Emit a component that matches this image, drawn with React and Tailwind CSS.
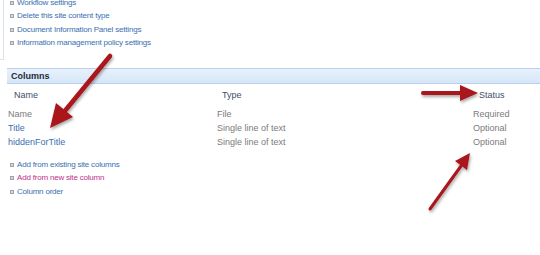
import React from "react";

const topLinks = [
  "Workflow settings",
  "Delete this site content type",
  "Document Information Panel settings",
  "Information management policy settings",
];

const rows = [
  { name: "Name", type: "File", status: "Required", link: false },
  { name: "Title", type: "Single line of text", status: "Optional", link: true },
  { name: "hiddenForTitle", type: "Single line of text", status: "Optional", link: true },
];

const bottomLinks = [
  { label: "Add from existing site columns", color: "text-[#3b6fb0]" },
  { label: "Add from new site column", color: "text-[#c0318a]" },
  { label: "Column order", color: "text-[#3b6fb0]" },
];

function Bullet() {
  return <span className="inline-block w-[4px] h-[4px] border border-[#9aa3ad] bg-[#d4d9de] mr-[3px] shrink-0" />;
}

function Arrows() {
  return (
    <svg className="absolute inset-0 pointer-events-none" width="540" height="255" viewBox="0 0 540 255">
      <defs>
        <filter id="sh" x="-20%" y="-20%" width="140%" height="140%">
          <feDropShadow dx="1" dy="2" stdDeviation="1.5" floodColor="#000" floodOpacity="0.35" />
        </filter>
      </defs>
      <g fill="#a9141b" stroke="#a9141b" filter="url(#sh)">
        <line x1="110" y1="56" x2="64" y2="112" strokeWidth="4.5" strokeLinecap="round" />
        <polygon points="50,128 56,103 73,117" stroke="none" />
        <line x1="423" y1="93" x2="462" y2="93" strokeWidth="4" strokeLinecap="round" />
        <polygon points="478,93 460,85 460,101" stroke="none" />
        <line x1="430" y1="209" x2="461" y2="166" strokeWidth="3" strokeLinecap="round" />
        <polygon points="470,153 455,161 467,170" stroke="none" />
      </g>
    </svg>
  );
}

export default function App() {
  return (
    <div className="relative w-[540px] h-[255px] bg-white overflow-hidden text-[8px] tracking-[-0.2px] leading-none" style={{ fontFamily: "'Liberation Sans', Arial, sans-serif" }}>
      <div className="flex">
        <div className="w-[4px] h-[60px] border-r border-b border-[#dfe3e8]" />
        <div className="flex flex-col pl-[6px] -mt-[4px]">
          {topLinks.map((t) => (
            <div key={t} className="flex items-center h-[13.5px] text-[#3b6fb0]">
              <Bullet />
              {t}
            </div>
          ))}
        </div>
      </div>

      <div className="ml-[7px] mt-[8px] h-[16px] flex items-center pl-[4px] bg-gradient-to-b from-[#e8f1fc] to-[#d6e6f8] border-t border-b border-[#b9d1ee] font-bold text-[9px] tracking-normal text-[#1f2b3a]">
        Columns
      </div>

      <div className="flex items-center h-[23px] pl-[14px] text-[9px] tracking-normal text-[#3f4f66]">
        <span className="w-[208px]">Name</span>
        <span className="w-[257px]">Type</span>
        <span>Status</span>
      </div>

      <div className="flex flex-col text-[9px] tracking-normal">
        {rows.map((r) => (
          <div key={r.name} className="flex items-center h-[14px] pl-[8px]">
            <span className={`w-[209px] ${r.link ? "text-[#3b6fb0]" : "text-[#7b7b7b]"}`}>{r.name}</span>
            <span className="w-[256px] text-[#7b7b7b]">{r.type}</span>
            <span className="text-[#7b7b7b]">{r.status}</span>
          </div>
        ))}
      </div>

      <div className="flex flex-col pl-[10px] mt-[9px]">
        {bottomLinks.map((l) => (
          <div key={l.label} className={`flex items-center h-[13.5px] ${l.color}`}>
            <Bullet />
            {l.label}
          </div>
        ))}
      </div>

      <Arrows />
    </div>
  );
}
